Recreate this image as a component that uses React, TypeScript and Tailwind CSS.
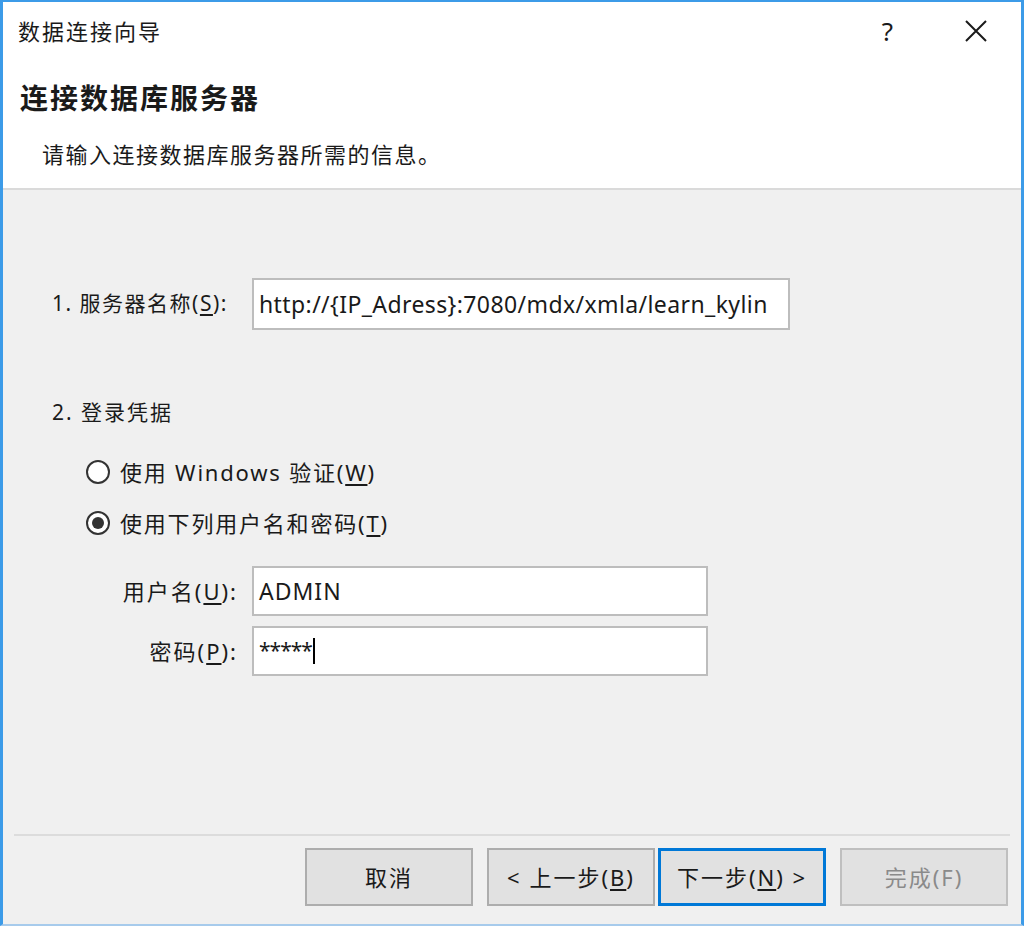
import React from "react";

const font = { fontFamily: '"Noto Sans", "Noto Sans CJK SC", sans-serif' };

function Radio({ checked }: { checked?: boolean }) {
  return (
    <span className="w-[24px] h-[24px] rounded-full border-2 border-[#333333] bg-white flex items-center justify-center shrink-0">
      {checked && <span className="w-[12px] h-[12px] rounded-full bg-[#333333]" />}
    </span>
  );
}

function U({ c }: { c: string }) {
  return <span className="underline underline-offset-[3px]">{c}</span>;
}

export default function App() {
  return (
    <div
      className="w-[1024px] h-[926px] bg-[#f0f0f0] border-t-2 border-l-[3px] border-r-[3px] border-b-2 border-t-[#3c9be8] border-l-[#3c9be8] border-r-[#3c9be8] border-b-[#a7cbec] flex flex-col text-[#1a1a1a] overflow-hidden"
      style={font}
    >
      {/* white header */}
      <div className="bg-white h-[186px] shrink-0 flex flex-col">
        <div className="h-[58px] flex items-center pl-[15px] pr-[30px]">
          <span className="text-[22px] tracking-[2px]">数据连接向导</span>
          <span className="ml-auto text-[26px] mr-[72px] leading-none">?</span>
          <svg width="22" height="22" viewBox="0 0 22 22" className="mr-[4px]">
            <path d="M1 1 L21 21 M21 1 L1 21" stroke="#1a1a1a" strokeWidth="2" />
          </svg>
        </div>
        <div className="pl-[17px] mt-[21px] text-[28px] tracking-[2px] font-bold leading-[34px]">连接数据库服务器</div>
        <div className="pl-[39px] mt-[25px] text-[22px] tracking-[1.5px] leading-[28px]">请输入连接数据库服务器所需的信息。</div>
      </div>
      <div className="h-[2px] bg-[#dadada] shrink-0" />

      <div className="flex-1 flex flex-col">
        {/* server */}
        <div className="flex items-center mt-[88px] pl-[49px]">
          <span className="text-[21px] tracking-[1.5px] w-[200px]">
            1. 服务器名称(<U c="S" />):
          </span>
          <div className="w-[538px] h-[52px] border-2 border-[#bdbdbd] bg-white flex items-center pl-[5px] text-[23px] tracking-[0.4px]">
            http://{"{"}IP_Adress{"}"}:7080/mdx/xmla/learn_kylin
          </div>
        </div>

        <div className="pl-[49px] mt-[67px] text-[21px] tracking-[2px] leading-[30px]">2. 登录凭据</div>

        <div className="pl-[83px] mt-[30px] flex items-center gap-[10px] text-[22px] tracking-[1.8px] leading-[30px]">
          <Radio />
          <span>
            使用 Windows 验证(<U c="W" />)
          </span>
        </div>
        <div className="pl-[83px] mt-[21px] flex items-center gap-[10px] text-[22px] tracking-[1.8px] leading-[30px]">
          <Radio checked />
          <span>
            使用下列用户名和密码(<U c="T" />)
          </span>
        </div>

        <div className="flex items-center mt-[28px] pl-[49px]">
          <span className="w-[200px] text-right pr-[14px] text-[22px] tracking-[2px]">
            用户名(<U c="U" />):
          </span>
          <div className="w-[456px] h-[50px] border-2 border-[#bdbdbd] bg-white flex items-center pl-[5px] text-[23px] tracking-[1px]">
            ADMIN
          </div>
        </div>
        <div className="flex items-center mt-[10px] pl-[49px]">
          <span className="w-[200px] text-right pr-[14px] text-[22px] tracking-[2px]">
            密码(<U c="P" />):
          </span>
          <div className="w-[456px] h-[50px] border-2 border-[#bdbdbd] bg-white flex items-center pl-[5px] text-[21px]">
            <span className="tracking-[-1px]">*****</span>
            <span className="w-[2px] h-[26px] bg-black ml-[1px]" />
          </div>
        </div>

        <div className="mt-auto">
          <div className="mx-[11px] h-[2px] bg-[#dcdcdc]" />
          <div className="flex justify-end pr-[13px] pt-[12px] pb-[18px] text-[22px] tracking-[2px]">
            <button className="w-[168px] h-[58px] bg-[#e1e1e1] border-2 border-[#adadad] flex items-center justify-center">
              取消
            </button>
            <button className="ml-[14px] w-[168px] h-[58px] bg-[#e1e1e1] border-2 border-[#adadad] flex items-center justify-center">
              &lt; 上一步(<U c="B" />)
            </button>
            <button className="ml-[3px] w-[168px] h-[58px] bg-[#e1e1e1] border-[3px] border-[#0078d7] flex items-center justify-center">
              下一步(<U c="N" />) &gt;
            </button>
            <button className="ml-[14px] w-[168px] h-[58px] bg-[#e1e1e1] border-2 border-[#bfbfbf] text-[#8a8a8a] flex items-center justify-center">
              完成(F)
            </button>
          </div>
        </div>
      </div>
    </div>
  );
}
